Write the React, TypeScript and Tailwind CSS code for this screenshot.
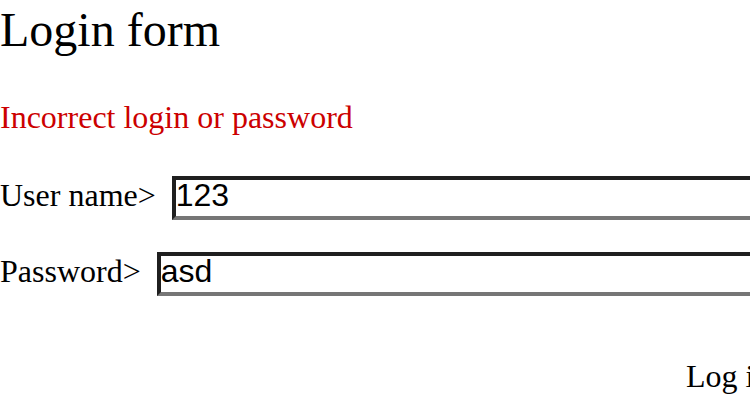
import React, { useState, FormEvent } from "react";

const LoginPage: React.FC = () => {
  const [login, setLogin] = useState<string>("123");
  const [password, setPassword] = useState<string>("asd");

  const handleSubmit = (e: FormEvent<HTMLFormElement>): void => {
    e.preventDefault();
  };

  const inputClass =
    "flex-1 min-w-0 h-[44px] px-0 pt-0 pb-[6px] leading-[30px] border-4 border-t-[#1f1f1f] border-l-[#1f1f1f] border-b-[#767676] border-r-[#767676] bg-white text-black text-[32px] font-['Liberation_Sans',Arial,sans-serif] outline-none";

  return (
    <div className="w-[750px] h-[416px] overflow-hidden bg-white text-black font-['Liberation_Serif','Times_New_Roman',serif]">
      <div className="w-[900px] flex flex-col">
        <h1 className="text-[48px] leading-[60px] font-normal">Login form</h1>
        <p className="mt-[39px] text-[32px] leading-[36px] text-[#cc0000]">
          Incorrect login or password
        </p>

        <form onSubmit={handleSubmit} className="mt-[41px] flex flex-col">
          <div className="flex items-baseline gap-4">
            <label htmlFor="login" className="text-[32px] leading-[36px]">
              User name&gt;
            </label>
            <input
              id="login"
              type="text"
              value={login}
              onChange={(e) => setLogin(e.target.value)}
              className={inputClass}
            />
          </div>

          <div className="mt-[32px] flex items-baseline gap-4">
            <label htmlFor="password" className="text-[32px] leading-[36px]">
              Password&gt;
            </label>
            <input
              id="password"
              type="text"
              value={password}
              onChange={(e) => setPassword(e.target.value)}
              className={inputClass}
            />
          </div>

          <div className="mt-[62px] pl-[686px]">
            <button
              type="submit"
              className="text-[32px] leading-[36px] bg-transparent whitespace-nowrap"
            >
              Log in
            </button>
          </div>
        </form>
      </div>
    </div>
  );
};

export default function App() {
  return <LoginPage />;
}
